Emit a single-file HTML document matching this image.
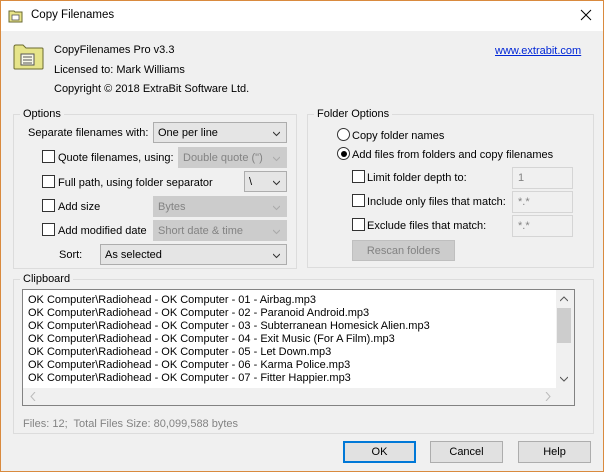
<!DOCTYPE html>
<html><head><meta charset="utf-8"><style>
*{box-sizing:border-box;margin:0;padding:0}
body{width:604px;height:472px;overflow:hidden;font-family:"Liberation Sans",sans-serif;font-size:11px;color:#000;background:#f0f0f0;position:relative}
.a{position:absolute;white-space:nowrap}
.t{margin-top:2px}
.frame{position:absolute;left:0;top:0;width:604px;height:472px;border:1px solid #d98a3e;border-top:none;pointer-events:none}
.title{position:absolute;left:0;top:0;width:604px;height:31px;background:#fff;border-top:1px solid #d98a3e}
.grp{position:absolute;border:1px solid #dcdcdc}
.lg{position:absolute;background:#f0f0f0;padding:0 3px;top:-7px;left:6px}
.cb{position:absolute;width:13px;height:13px;border:1px solid #333;background:#fff}
.combo{position:absolute;border:1px solid #adadad;background:#e5e5e5;padding-left:4px;line-height:20px}
.combo.d{background:#cccccc;border-color:#cccccc;color:#838383}
.chev{position:absolute;right:6px;top:7px;width:7px;height:7px}
.tb{position:absolute;border:1px solid #d5d5d5;background:#f0f0f0;color:#838383;padding-left:5px;line-height:20px}
.btn{position:absolute;border:1px solid #adadad;background:#e1e1e1;text-align:center;line-height:20px}
.rad{position:absolute;width:13px;height:13px;border:1px solid #333;border-radius:50%;background:#fff}
</style></head><body>
<div class="title"></div>
<svg class="a" style="left:8px;top:9px" width="16" height="14"><path d="M1 2h5l1 1h7v10H1z" fill="#e8e48a" stroke="#6a6a30"/><rect x="4" y="6" width="7" height="5" fill="#fff" stroke="#555" stroke-width=".8"/></svg>
<div class="a" style="left:31px;top:9px;font-size:11.5px">Copy Filenames</div>
<svg class="a" style="left:580px;top:9px" width="12" height="12"><path d="M1 1L11 11M11 1L1 11" stroke="#000" stroke-width="1"/></svg>

<svg class="a" style="left:13px;top:44px" width="31" height="26"><path d="M1 3q0-2 2-2h7l3 3h16q1 0 1 1v19q0 1-1 1H2q-1 0-1-1z" fill="#e6e48a" stroke="#6a6a30"/><rect x="8" y="10" width="13" height="11" fill="#f8f8e8" stroke="#555"/><path d="M10 13h9M10 16h9M10 19h9" stroke="#555"/></svg>
<div class="a t" style="left:54px;top:42px">CopyFilenames Pro v3.3</div>
<div class="a t" style="left:54px;top:62px">Licensed to: Mark Williams</div>
<div class="a t" style="left:54px;top:81px">Copyright © 2018 ExtraBit Software Ltd.</div>
<div class="a t" style="left:495px;top:43px;color:#0026d6;text-decoration:underline">www.extrabit.com</div>

<div class="grp" style="left:13px;top:114px;width:284px;height:155px"><div class="lg">Options</div></div>
<div class="a t" style="left:28px;top:125px">Separate filenames with:</div>
<div class="combo" style="left:153px;top:122px;width:134px;height:21px">One per line<svg class="chev" viewBox="0 0 7 7"><path d="M0 2l3.5 3.5L7 2" stroke="#333" fill="none"/></svg></div>
<div class="cb" style="left:42px;top:150px"></div><div class="a t" style="left:58px;top:150px">Quote filenames, using:</div>
<div class="combo d" style="left:178px;top:147px;width:109px;height:21px">Double quote (")<svg class="chev" viewBox="0 0 7 7"><path d="M0 2l3.5 3.5L7 2" stroke="#aaa" fill="none"/></svg></div>
<div class="cb" style="left:42px;top:175px"></div><div class="a t" style="left:58px;top:175px">Full path, using folder separator</div>
<div class="combo" style="left:244px;top:171px;width:43px;height:21px">\<svg class="chev" viewBox="0 0 7 7"><path d="M0 2l3.5 3.5L7 2" stroke="#333" fill="none"/></svg></div>
<div class="cb" style="left:42px;top:199px"></div><div class="a t" style="left:58px;top:199px">Add size</div>
<div class="combo d" style="left:153px;top:196px;width:134px;height:21px">Bytes<svg class="chev" viewBox="0 0 7 7"><path d="M0 2l3.5 3.5L7 2" stroke="#aaa" fill="none"/></svg></div>
<div class="cb" style="left:42px;top:223px"></div><div class="a t" style="left:58px;top:223px">Add modified date</div>
<div class="combo d" style="left:153px;top:220px;width:134px;height:21px">Short date &amp; time<svg class="chev" viewBox="0 0 7 7"><path d="M0 2l3.5 3.5L7 2" stroke="#aaa" fill="none"/></svg></div>
<div class="a t" style="left:59px;top:247px">Sort:</div>
<div class="combo" style="left:100px;top:244px;width:187px;height:21px">As selected<svg class="chev" viewBox="0 0 7 7"><path d="M0 2l3.5 3.5L7 2" stroke="#333" fill="none"/></svg></div>

<div class="grp" style="left:307px;top:114px;width:287px;height:154px"><div class="lg">Folder Options</div></div>
<div class="rad" style="left:337px;top:128px"></div><div class="a t" style="left:352px;top:128px">Copy folder names</div>
<div class="rad" style="left:337px;top:147px"><div style="position:absolute;left:2.5px;top:2.5px;width:6px;height:6px;border-radius:50%;background:#000"></div></div><div class="a t" style="left:352px;top:147px">Add files from folders and copy filenames</div>
<div class="cb" style="left:352px;top:170px"></div><div class="a t" style="left:367px;top:170px">Limit folder depth to:</div>
<div class="tb" style="left:512px;top:167px;width:61px;height:22px">1</div>
<div class="cb" style="left:352px;top:194px"></div><div class="a t" style="left:367px;top:194px">Include only files that match:</div>
<div class="tb" style="left:512px;top:191px;width:61px;height:22px">*.*</div>
<div class="cb" style="left:352px;top:218px"></div><div class="a t" style="left:367px;top:218px">Exclude files that match:</div>
<div class="tb" style="left:512px;top:215px;width:61px;height:22px">*.*</div>
<div class="btn" style="left:352px;top:240px;width:103px;height:21px;background:#cccccc;border-color:#bfbfbf;color:#838383">Rescan folders</div>

<div class="grp" style="left:13px;top:279px;width:581px;height:155px"><div class="lg">Clipboard</div></div>
<div class="a" style="left:22px;top:289px;width:553px;height:117px;border:1px solid #828282;background:#fff"></div>
<div class="a" style="left:28px;top:294px;line-height:13px">OK Computer\Radiohead - OK Computer - 01 - Airbag.mp3<br>OK Computer\Radiohead - OK Computer - 02 - Paranoid Android.mp3<br>OK Computer\Radiohead - OK Computer - 03 - Subterranean Homesick Alien.mp3<br>OK Computer\Radiohead - OK Computer - 04 - Exit Music (For A Film).mp3<br>OK Computer\Radiohead - OK Computer - 05 - Let Down.mp3<br>OK Computer\Radiohead - OK Computer - 06 - Karma Police.mp3<br>OK Computer\Radiohead - OK Computer - 07 - Fitter Happier.mp3</div>
<div class="a" style="left:556px;top:290px;width:18px;height:98px;background:#f0f0f0"></div>
<div class="a" style="left:557px;top:308px;width:14px;height:35px;background:#cdcdcd"></div>
<div class="a" style="left:23px;top:388px;width:551px;height:17px;background:#f0f0f0"></div>
<svg class="a" style="left:560px;top:295px" width="8" height="8"><path d="M0 6l4-4 4 4" stroke="#555" fill="none"/></svg>
<svg class="a" style="left:560px;top:375px" width="8" height="8"><path d="M0 2l4 4 4-4" stroke="#555" fill="none"/></svg>
<svg class="a" style="left:29px;top:392px" width="8" height="9"><path d="M6 0L2 4.5 6 9" stroke="#bbb" fill="none"/></svg>
<svg class="a" style="left:544px;top:392px" width="8" height="9"><path d="M2 0l4 4.5L2 9" stroke="#bbb" fill="none"/></svg>
<div class="a t" style="left:23px;top:416px;color:#838383">Files: 12;&nbsp; Total Files Size: 80,099,588 bytes</div>

<div class="btn" style="left:343px;top:441px;width:73px;height:22px;border:2px solid #0078d7;line-height:18px">OK</div>
<div class="btn" style="left:430px;top:441px;width:73px;height:22px">Cancel</div>
<div class="btn" style="left:518px;top:441px;width:73px;height:22px">Help</div>
<div class="frame"></div>
</body></html>
